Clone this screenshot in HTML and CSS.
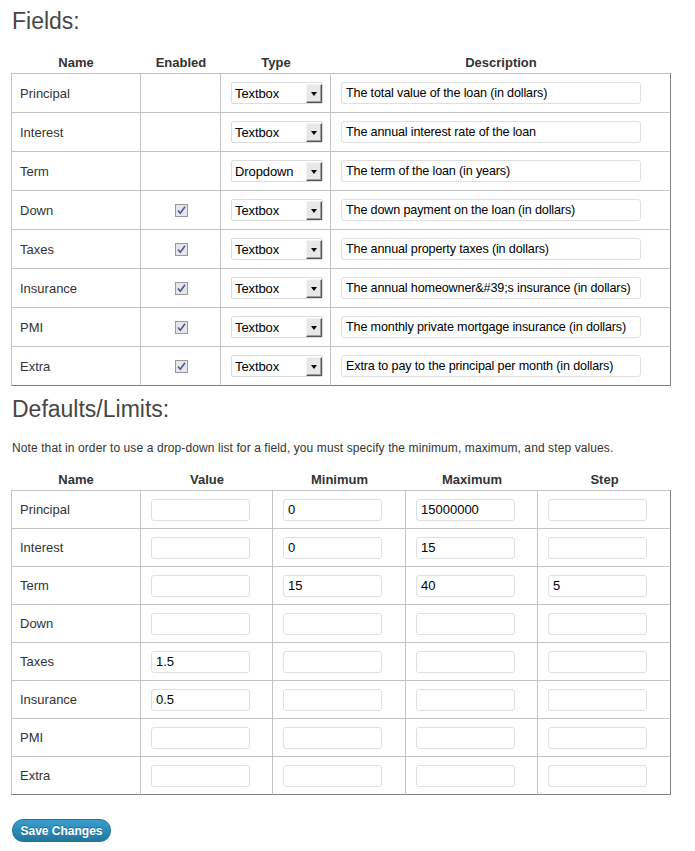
FILE: index.html
```html
<!DOCTYPE html>
<html>
<head>
<meta charset="utf-8">
<link rel="stylesheet" href="styles.css">
</head>
<body>
<div class="wrap">
  <h2 class="title">Fields:</h2>
  <table class="grid fields">
    <colgroup><col class="c1"><col class="c2"><col class="c3"><col class="c4"></colgroup>
    <thead><tr><th>Name</th><th>Enabled</th><th>Type</th><th>Description</th></tr></thead>
    <tbody>
      <tr><td>Principal</td><td class="center"></td><td><div class="select"><span>Textbox</span><span class="arrow"></span></div></td><td><div class="input wide">The total value of the loan (in dollars)</div></td></tr>
      <tr><td>Interest</td><td class="center"></td><td><div class="select"><span>Textbox</span><span class="arrow"></span></div></td><td><div class="input wide">The annual interest rate of the loan</div></td></tr>
      <tr><td>Term</td><td class="center"></td><td><div class="select"><span>Dropdown</span><span class="arrow"></span></div></td><td><div class="input wide">The term of the loan (in years)</div></td></tr>
      <tr><td>Down</td><td class="center"><span class="check"><svg viewBox="0 0 11 11" width="11" height="11"><path d="M2 5.5 L4.3 8.3 L9 1.8" fill="none" stroke="#4a5a9a" stroke-width="1.6"/></svg></span></td><td><div class="select"><span>Textbox</span><span class="arrow"></span></div></td><td><div class="input wide">The down payment on the loan (in dollars)</div></td></tr>
      <tr><td>Taxes</td><td class="center"><span class="check"><svg viewBox="0 0 11 11" width="11" height="11"><path d="M2 5.5 L4.3 8.3 L9 1.8" fill="none" stroke="#4a5a9a" stroke-width="1.6"/></svg></span></td><td><div class="select"><span>Textbox</span><span class="arrow"></span></div></td><td><div class="input wide">The annual property taxes (in dollars)</div></td></tr>
      <tr><td>Insurance</td><td class="center"><span class="check"><svg viewBox="0 0 11 11" width="11" height="11"><path d="M2 5.5 L4.3 8.3 L9 1.8" fill="none" stroke="#4a5a9a" stroke-width="1.6"/></svg></span></td><td><div class="select"><span>Textbox</span><span class="arrow"></span></div></td><td><div class="input wide">The annual homeowner&amp;#39;s insurance (in dollars)</div></td></tr>
      <tr><td>PMI</td><td class="center"><span class="check"><svg viewBox="0 0 11 11" width="11" height="11"><path d="M2 5.5 L4.3 8.3 L9 1.8" fill="none" stroke="#4a5a9a" stroke-width="1.6"/></svg></span></td><td><div class="select"><span>Textbox</span><span class="arrow"></span></div></td><td><div class="input wide">The monthly private mortgage insurance (in dollars)</div></td></tr>
      <tr><td>Extra</td><td class="center"><span class="check"><svg viewBox="0 0 11 11" width="11" height="11"><path d="M2 5.5 L4.3 8.3 L9 1.8" fill="none" stroke="#4a5a9a" stroke-width="1.6"/></svg></span></td><td><div class="select"><span>Textbox</span><span class="arrow"></span></div></td><td><div class="input wide">Extra to pay to the principal per month (in dollars)</div></td></tr>
    </tbody>
  </table>

  <h2 class="title second">Defaults/Limits:</h2>
  <p class="note">Note that in order to use a drop-down list for a field, you must specify the minimum, maximum, and step values.</p>

  <table class="grid limits">
    <colgroup><col class="d1"><col class="d2"><col class="d3"><col class="d4"><col class="d5"></colgroup>
    <thead><tr><th>Name</th><th>Value</th><th>Minimum</th><th>Maximum</th><th>Step</th></tr></thead>
    <tbody>
      <tr><td>Principal</td><td><div class="input"></div></td><td><div class="input">0</div></td><td><div class="input">15000000</div></td><td><div class="input"></div></td></tr>
      <tr><td>Interest</td><td><div class="input"></div></td><td><div class="input">0</div></td><td><div class="input">15</div></td><td><div class="input"></div></td></tr>
      <tr><td>Term</td><td><div class="input"></div></td><td><div class="input">15</div></td><td><div class="input">40</div></td><td><div class="input">5</div></td></tr>
      <tr><td>Down</td><td><div class="input"></div></td><td><div class="input"></div></td><td><div class="input"></div></td><td><div class="input"></div></td></tr>
      <tr><td>Taxes</td><td><div class="input">1.5</div></td><td><div class="input"></div></td><td><div class="input"></div></td><td><div class="input"></div></td></tr>
      <tr><td>Insurance</td><td><div class="input">0.5</div></td><td><div class="input"></div></td><td><div class="input"></div></td><td><div class="input"></div></td></tr>
      <tr><td>PMI</td><td><div class="input"></div></td><td><div class="input"></div></td><td><div class="input"></div></td><td><div class="input"></div></td></tr>
      <tr><td>Extra</td><td><div class="input"></div></td><td><div class="input"></div></td><td><div class="input"></div></td><td><div class="input"></div></td></tr>
    </tbody>
  </table>

  <button class="btn">Save Changes</button>
</div>
</body>
</html>
```
FILE: styles.css
```css
html, body { margin: 0; padding: 0; background: #fff; }
body {
  font-family: "Liberation Sans", Arial, sans-serif;
  color: #333;
  font-size: 13px;
}
.wrap { padding: 7px 0 0 11px; width: 660px; }
.title {
  margin: 0;
  font-weight: normal;
  font-size: 23px;
  line-height: 29px;
  height: 29px;
  color: #464646;
  padding-left: 1px;
}
.second { margin-top: 9px; }
.note {
  margin: 16px 0 0 1px;
  font-size: 12px;
  letter-spacing: 0.1px;
  line-height: 16px;
  color: #333;
}
.grid {
  border-collapse: separate;
  border-spacing: 0;
  table-layout: fixed;
}
.fields { width: 660px; margin-top: 17px; }
.limits { width: 660px; margin-top: 14px; }
.c1 { width: 130px; } .c2 { width: 80px; } .c3 { width: 110px; } .c4 { width: 340px; }
.d1 { width: 130px; } .d2 { width: 132px; } .d3 { width: 133px; } .d4 { width: 132px; } .d5 { width: 133px; }
.grid th {
  font-weight: bold;
  font-size: 13px;
  height: 18px;
  padding: 0 0 2px;
  text-align: center;
  color: #333;
  vertical-align: middle;
}
.grid td {
  padding: 0 0 0 9px;
  height: 38px;
  border-right: 1px solid #c4c4c4;
  border-bottom: 1px solid #c4c4c4;
  vertical-align: middle;
  white-space: nowrap;
}
.limits td { height: 37px; }
.grid td:first-child { border-left: 1px solid #c4c4c4; padding-left: 8px; }
.grid tbody tr:first-child td { border-top: 1px solid #c4c4c4; }
.grid td:last-child { border-right-color: #808080; }
.grid tbody tr:last-child td { border-bottom-color: #808080; }
.fields td:nth-child(3) { padding-left: 10px; }
.fields td:nth-child(4) { padding-left: 10px; }
.limits td:not(:first-child) { padding-left: 10px; }
.center { text-align: center; }
.fields td.center { padding-left: 1px; }
.check {
  display: inline-block;
  vertical-align: middle;
  width: 11px;
  height: 11px;
  border: 1px solid #9a9a9a;
  background: #e6e6e6;
  margin-top: -1px;
}
.check svg { display: block; }
.select {
  width: 90px;
  height: 20px;
  border: 1px solid #dcdcdc;
  border-radius: 2px;
  background: #fff;
  display: flex;
  align-items: center;
  justify-content: space-between;
  box-sizing: content-box;
  color: #000;
  font-size: 13px;
}
.select span:first-child { padding-left: 3px; letter-spacing: -0.1px; }
.arrow {
  width: 14px;
  height: 17px;
  margin-right: 0;
  background: #e8e8e8;
  border-top: 1px solid #f4f4f4;
  border-left: 1px solid #f4f4f4;
  border-right: 1px solid #555;
  border-bottom: 1px solid #555;
  box-shadow: inset -1px -1px 0 #a0a0a0;
  position: relative;
}
.arrow::after {
  content: "";
  position: absolute;
  left: 3.5px;
  top: 7px;
  border-left: 3.5px solid transparent;
  border-right: 3.5px solid transparent;
  border-top: 4px solid #000;
}
.input {
  box-sizing: border-box;
  width: 99px;
  height: 22px;
  border: 1px solid #dfdfdf;
  border-radius: 3px;
  background: #fff;
  padding: 0 4px;
  line-height: 20px;
  font-size: 13px;
  color: #000;
  overflow: hidden;
}
.input.wide { width: 300px; font-size: 12.6px; letter-spacing: -0.15px; }
.btn {
  margin: 24px 0 0 1px;
  display: block;
  width: 99px;
  height: 23px;
  padding: 0;
  border: 1px solid #21759b;
  border-radius: 11px;
  background: linear-gradient(#3a9fcf, #21759b);
  color: #fff;
  font-family: "Liberation Sans", Arial, sans-serif;
  font-weight: bold;
  font-size: 12px;
  text-shadow: 0 -1px 0 rgba(0,0,0,0.3);
}
```
